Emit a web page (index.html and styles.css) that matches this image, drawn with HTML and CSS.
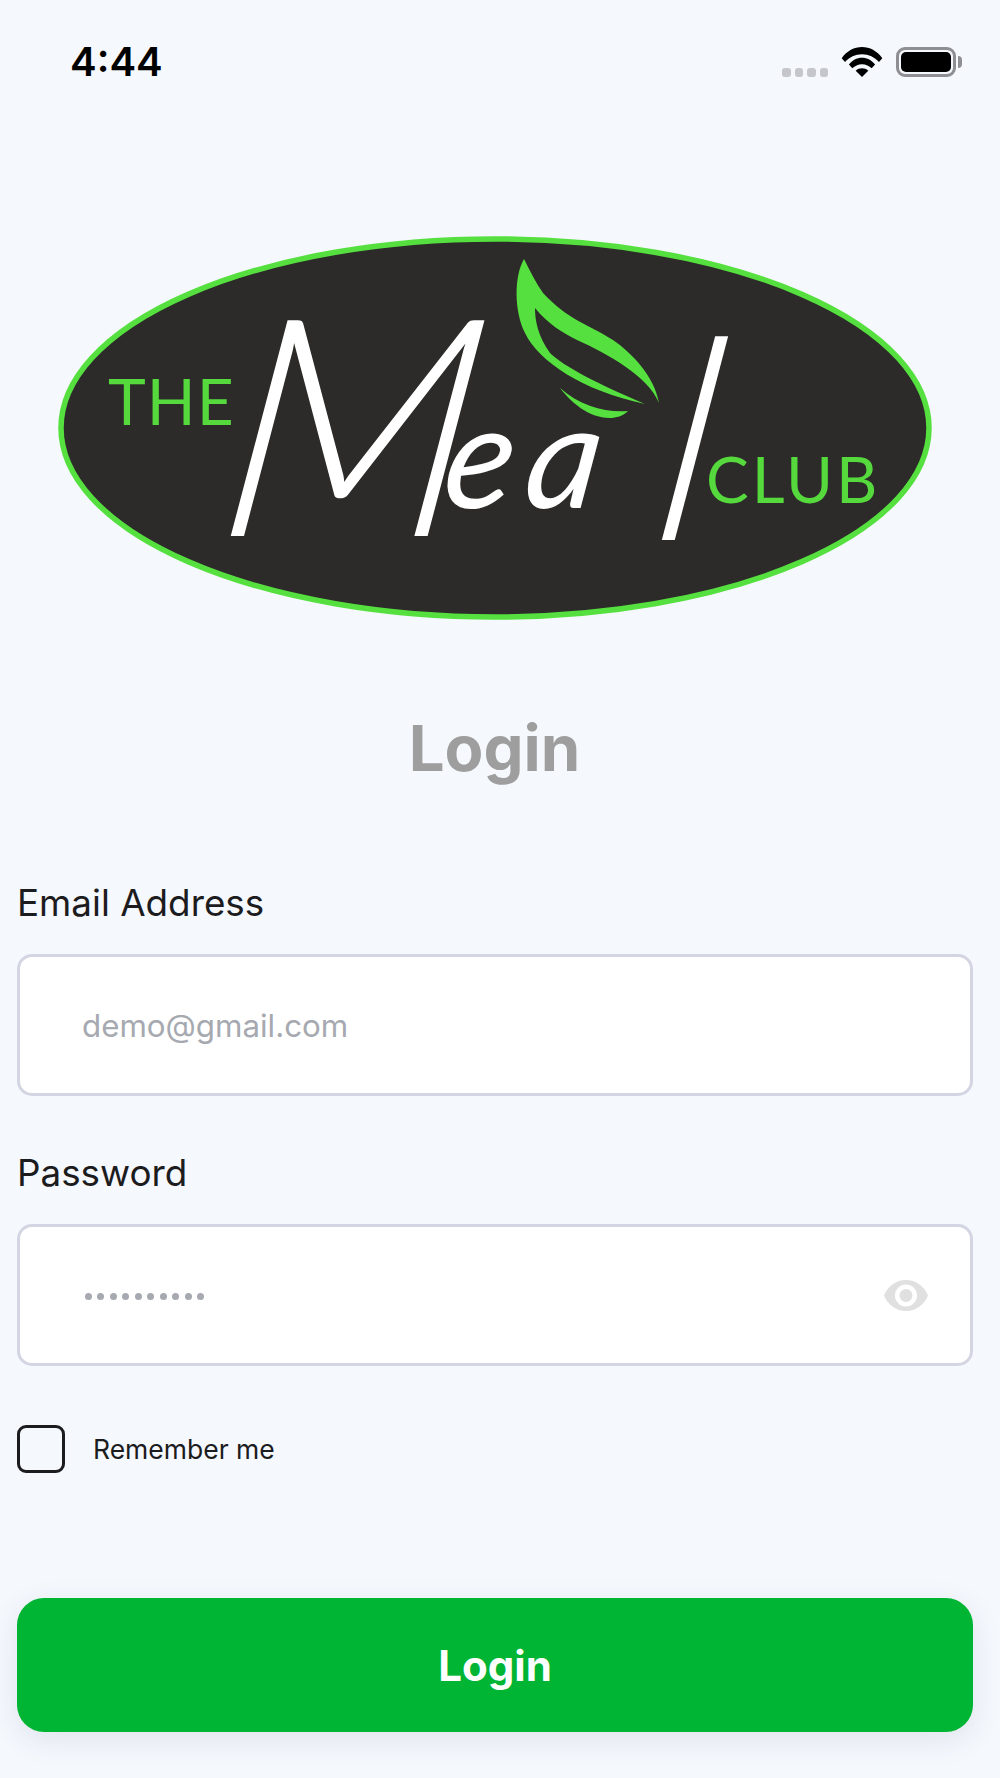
FILE: index.html
```html
<!DOCTYPE html>
<html lang="en">
<head>
<meta charset="utf-8">
<title>Login</title>
<link rel="stylesheet" href="styles.css">
</head>
<body>
<div class="screen">
  <header class="status">
    <span class="time">4:44</span>
    <div class="status-icons">
      <div class="signal"><i></i><i></i><i></i><i></i></div>
      <svg class="wifi" viewBox="0 0 42 31" aria-hidden="true">
        <path d="M0 11.500C5.500 4 13 0 21 0s15.500 4 21 11.500L38.500 15.500C34 10.500 28 7.500 21 7.500S8 10.500 3.500 15.500Z"/>
        <path d="M7.500 18C11 13.500 15.500 11 21 11s10 2.500 13.500 7L31 22C28.500 19.500 25 17.800 21 17.800S13.500 19.500 11 22Z"/>
        <path d="M14.500 24.500C16.500 22.800 18.500 22 21 22s4.500.8 6.500 2.500L21 31Z"/>
      </svg>
      <div class="battery"><div class="battery-fill"></div><span class="battery-cap"></span></div>
    </div>
  </header>

  <svg class="logo" viewBox="0 0 880 390" role="img" aria-label="The Meal Club">
    <ellipse class="logo-oval" cx="437" cy="192" rx="434" ry="189"/>
    <path class="logo-leaf" d="M466 23C456 40 456 75 467 97C480 125 525 155 587 168C540 148 505 130 492 117C480 100 477 85 477 72C490 88 505 97 519 104C550 118 590 140 601 167C596 140 575 118 555 104C530 88 510 84 485 57C478 47 472 35 466 23Z"/>
    <path class="logo-leaf" d="M502 152C512 165 530 182 552 182C558 182 565 180 570 175C549 177 522 170 502 152Z"/>
    <text class="logo-small" x="50" y="189">THE</text>
    <text class="logo-script" transform="skewX(-8)"><tspan x="196" y="300">M</tspan><tspan class="logo-script-small" x="420" y="272">ea</tspan><tspan class="logo-script-tall" x="634" y="304">l</tspan></text>
    <text class="logo-small logo-club" x="648" y="267">CLUB</text>
  </svg>

  <h1 class="title">Login</h1>

  <form class="form">
    <label class="field-label">Email Address</label>
    <div class="input"><span class="placeholder">demo@gmail.com</span></div>

    <label class="field-label field-label-second">Password</label>
    <div class="input">
      <div class="dots"><i></i><i></i><i></i><i></i><i></i><i></i><i></i><i></i><i></i><i></i></div>
      <svg class="eye" viewBox="0 0 44 31" aria-hidden="true">
        <path fill-rule="evenodd" d="M22 0C32 0 40 6 44 15.500C40 25 32 31 22 31S4 25 0 15.500C4 6 12 0 22 0ZM22 4.500A11 11 0 1 0 22 26.500A11 11 0 1 0 22 4.500Z"/>
        <circle cx="22" cy="15.500" r="6.500"/>
      </svg>
    </div>

    <div class="remember">
      <span class="checkbox"></span>
      <span class="remember-text">Remember me</span>
    </div>

    <button class="submit" type="button">Login</button>
  </form>
</div>
</body>
</html>
```

FILE: styles.css
```css
* { box-sizing: border-box; }
html, body { margin: 0; padding: 0; }
body { background: #f5f8fd; font-family: Inter, "Liberation Sans", sans-serif; color: #1c1c1e; }
.screen { width: 1000px; height: 1778px; display: flex; flex-direction: column; overflow: hidden; }

.status { display: flex; justify-content: space-between; align-items: flex-start; padding: 40px 40px 0 70px; height: 236px; }
.time { font-size: 40px; font-weight: 600; line-height: 44px; color: #000; }
.status-icons { display: flex; align-items: flex-end; margin-top: 7px; }
.signal { display: flex; gap: 4px; margin-right: 13px; }
.signal i { display: block; width: 8.500px; height: 9px; border-radius: 3px; background: #c4c6cb; }
.wifi { width: 42px; height: 30px; fill: #000; display: block; }
.battery { position: relative; width: 60px; height: 30px; margin-left: 13px; margin-right: 4px; padding: 2px; border: 3px solid #8e8e93; border-radius: 9px; }
.battery-fill { height: 100%; background: #000; border-radius: 5px; }
.battery-cap { position: absolute; right: -9px; top: 6px; width: 4px; height: 12px; background: #8e8e93; border-radius: 0 4px 4px 0; }

.logo { display: block; width: 880px; height: 390px; margin-left: 58px; flex: none; }
.logo-oval { fill: #2c2b29; stroke: #56e03f; stroke-width: 5.500; }
.logo-leaf { fill: #56e03f; }
.logo-small { font-family: Lato, sans-serif; font-size: 64px; letter-spacing: 1px; fill: #56d93d; }
.logo-club { letter-spacing: 3px; }
.logo-script { font-family: Lato, sans-serif; font-style: italic; font-weight: 300; font-size: 305px; fill: #fff; }
.logo-script-small { font-size: 145px; font-weight: 400; letter-spacing: 12px; }
.logo-script-tall { font-size: 280px; }

.title { margin: 86px 27px 0 16px; text-align: center; font-size: 63.500px; line-height: 72px; font-weight: 700; color: #9e9e9f; }

.form { display: flex; flex-direction: column; padding: 0 27px 0 17px; }
.field-label { display: block; font-size: 36.800px; line-height: 44px; margin-top: 97px; color: #1c1c1e; }
.field-label-second { margin-top: 55px; }
.input { display: flex; align-items: center; justify-content: space-between; height: 142px; margin-top: 29px; padding: 2px 42px 0 62px; background: #fff; border: 3px solid #d3d5e3; border-radius: 15px; }
.placeholder { font-size: 31.300px; color: #a6a9b0; }
.dots { display: flex; gap: 5.440px; margin-left: 3px; }
.dots i { display: block; width: 7px; height: 7px; border-radius: 50%; background: #a6a9b0; }
.eye { width: 44px; height: 31px; fill: #e0e0e0; display: block; margin-top: -2px; }

.remember { display: flex; align-items: center; margin-top: 59px; }
.checkbox { width: 48px; height: 48px; border: 3px solid #1c1c1e; border-radius: 9px; flex: none; }
.remember-text { font-size: 26.500px; margin-left: 28px; }

.submit { display: block; width: 956px; height: 134px; margin-top: 125px; border: 0; border-radius: 27px; background: #00b533; color: #fff; font-family: Inter, sans-serif; font-size: 42px; font-weight: 700; box-shadow: 0 8px 30px rgba(40, 60, 90, 0.1); }
```
